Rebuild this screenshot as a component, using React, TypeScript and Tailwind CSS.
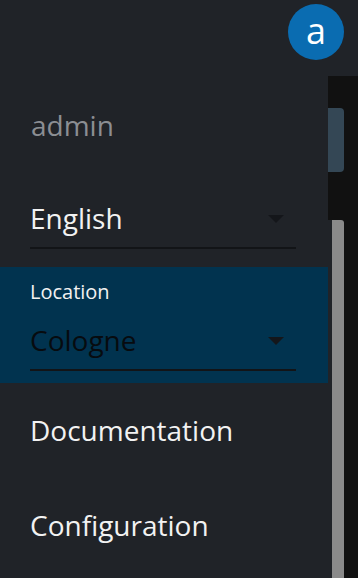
const font = { fontFamily: '"Open Sans", "Noto Sans", sans-serif' };

function Caret() {
  return (
    <svg width="16" height="8" viewBox="0 0 16 8" className="shrink-0">
      <path d="M0 0 L16 0 L8 8 Z" fill="#14161a" />
    </svg>
  );
}

function SelectField({ value, dark }: { value: string; dark?: boolean }) {
  return (
    <div className="ml-[30px] w-[266px] flex items-center justify-between border-b-2 border-[#121417] pb-2">
      <span
        className={`text-[28px] leading-[42px] ${
          dark ? "text-[#070b0f]" : "text-[#f2f2f2]"
        }`}
      >
        {value}
      </span>
      <div className="mr-[12px] mt-[2px]">
        <Caret />
      </div>
    </div>
  );
}

export default function App() {
  return (
    <div
      className="w-[358px] h-[578px] overflow-hidden bg-[#202328] flex flex-col"
      style={font}
    >
      {/* Top bar with avatar */}
      <header className="h-[76px] shrink-0 flex justify-end pt-1 pr-[14px]">
        <div className="w-14 h-14 rounded-full bg-[#0a6cb1] flex items-center justify-center">
          <span className="text-[36px] leading-none text-white -mt-[2px]">a</span>
        </div>
      </header>

      <div className="flex flex-1 min-h-0">
        {/* Menu panel */}
        <nav className="w-[328px] shrink-0 flex flex-col">
          <div className="mt-[28px] pl-[31px] text-[28px] leading-[42px] text-[#8b8e93]">
            admin
          </div>

          <div className="mt-[51px]">
            <SelectField value="English" />
          </div>

          <div className="mt-[18px] bg-[#01334f] pt-[11px] pb-[12px]">
            <div className="pl-[30px] text-[20px] leading-[28px] text-[#f2f2f2]">
              Location
            </div>
            <div className="mt-[13px]">
              <SelectField value="Cologne" dark />
            </div>
          </div>

          <div className="mt-[26px] pl-[30px] text-[28px] leading-[42px] text-[#f2f2f2]">
            Documentation
          </div>
          <div className="mt-[53px] pl-[30px] text-[28px] leading-[42px] text-[#f2f2f2]">
            Configuration
          </div>
        </nav>

        {/* Page behind, with its scrollbar */}
        <div className="flex-1 bg-[#111111] flex flex-col">
          <div className="mt-[32px] w-4 h-16 rounded-r-[4px] bg-[#344755]" />
          <div className="mt-[48px] flex flex-1">
            <div className="w-1 bg-[#202328]" />
            <div className="w-3 bg-[#8a8a8a] rounded-tr-[3px]" />
          </div>
        </div>
      </div>
    </div>
  );
}
